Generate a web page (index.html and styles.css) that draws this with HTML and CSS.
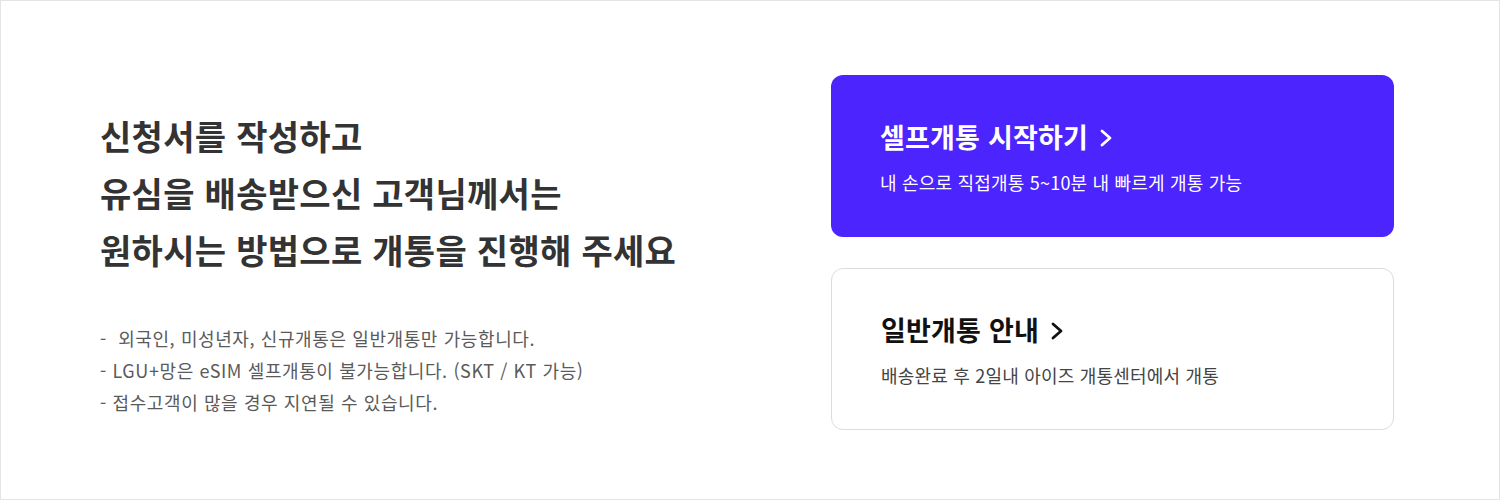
FILE: index.html
```html
<!DOCTYPE html>
<html lang="ko">
<head>
  <meta charset="UTF-8">
  <meta name="viewport" content="width=device-width, initial-scale=1">
  <title>개통 안내</title>
  <link rel="stylesheet" href="styles.css">
</head>
<body>
  <div class="page">
    <div class="intro">
      <h2>신청서를 작성하고<br>유심을 배송받으신 고객님께서는<br>원하시는 방법으로 개통을 진행해 주세요</h2>
      <ul class="notes">
        <li>-&nbsp; 외국인, 미성년자, 신규개통은 일반개통만 가능합니다.</li>
        <li>- LGU+망은 eSIM 셀프개통이 불가능합니다. (SKT / KT 가능)</li>
        <li>- 접수고객이 많을 경우 지연될 수 있습니다.</li>
      </ul>
    </div>

    <div class="options">
      <a class="card card-self" href="#">
        <span class="card-title">셀프개통 시작하기
          <svg class="chev" width="12" height="18" viewBox="0 0 12 18"><path d="M2 2 L10 9 L2 16" fill="none" stroke="currentColor" stroke-width="2.8" stroke-linecap="round" stroke-linejoin="round"/></svg>
        </span>
        <span class="card-desc">내 손으로 직접개통 5~10분 내 빠르게 개통 가능</span>
      </a>
      <a class="card card-normal" href="#">
        <span class="card-title">일반개통 안내
          <svg class="chev" width="12" height="18" viewBox="0 0 12 18"><path d="M2 2 L10 9 L2 16" fill="none" stroke="currentColor" stroke-width="2.8" stroke-linecap="round" stroke-linejoin="round"/></svg>
        </span>
        <span class="card-desc">배송완료 후 2일내 아이즈 개통센터에서 개통</span>
      </a>
    </div>
  </div>
</body>
</html>
```

FILE: styles.css
```css
body {
  margin: 0;
  padding: 0;
  background: #fff;
  font-family: "Noto Sans CJK KR", "Noto Sans", sans-serif;
}
.page {
  width: 1500px;
  height: 500px;
  box-sizing: border-box;
  border: 1px solid #e4e4e4;
  display: flex;
  justify-content: space-between;
  padding: 0 105px 0 99px;
}
.intro {
  padding-top: 106px;
}
h2 {
  margin: 0;
  font-size: 34px;
  line-height: 57px;
  font-weight: 700;
  color: #333;
  letter-spacing: 0.3px;
}
.notes {
  list-style: none;
  margin: 44px 0 0;
  padding: 0;
  font-size: 18px;
  line-height: 32px;
  color: #5a5a5a;
  letter-spacing: 0.6px;
}
.options {
  padding-top: 74px;
  display: flex;
  flex-direction: column;
  gap: 31px;
  width: 563px;
}
.card {
  display: block;
  height: 162px;
  box-sizing: border-box;
  border-radius: 12px;
  padding: 46px 49px 0;
  text-decoration: none;
}
.card-self {
  background: #4b24fe;
  color: #fff;
}
.card-normal {
  background: #fff;
  border: 1px solid #dcdcdc;
  padding-top: 45px;
  color: #111;
}
.card-title {
  display: flex;
  align-items: center;
  gap: 12px;
  font-size: 27px;
  line-height: 32px;
  font-weight: 700;
  letter-spacing: 0.2px;
}
.chev {
  margin-top: 1px;
}
.card-desc {
  display: block;
  margin-top: 17px;
  font-size: 18px;
  line-height: 24px;
  letter-spacing: 0.2px;
}
.card-normal .card-desc {
  color: #444;
}
```
